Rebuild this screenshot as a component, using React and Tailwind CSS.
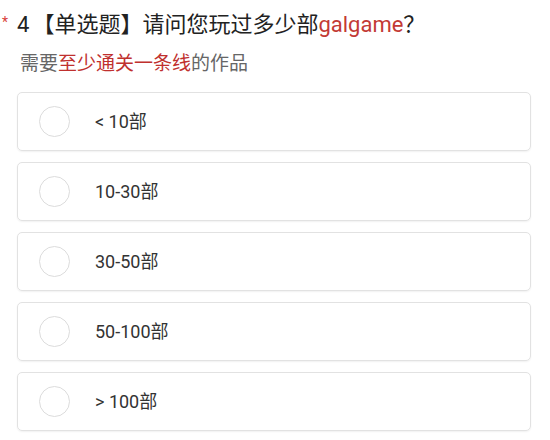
import React from "react";

const options = ["< 10部", "10-30部", "30-50部", "50-100部", "> 100部"];

export default function App() {
  return (
    <div
      className="w-[550px] h-[440px] bg-white overflow-hidden"
      style={{ fontFamily: 'Roboto, "Noto Sans CJK SC", sans-serif' }}
    >
      {/* 题目 */}
      <div className="flex items-center pt-[8px] pl-[2px] h-[42px]">
        <span className="text-[#d9403a] text-[14px] self-start mt-[4px] w-[15px]">*</span>
        <span className="text-[22px] text-[#222] leading-none">4</span>
        <span className="text-[22px] text-[#222] leading-none ml-[3px]">
          【单选题】请问您玩过多少部<span className="text-[#c33a35]">galgame</span>？
        </span>
      </div>
      <div className="pl-[20px] mt-[9px] text-[19px] leading-[26px] text-[#666]">
        需要<span className="text-[#c0302e]">至少通关一条线</span>的作品
      </div>

      {/* 选项 */}
      <div className="flex flex-col gap-[11px] mt-[15px] ml-[17px] w-[514px]">
        {options.map((o) => (
          <div
            key={o}
            className="h-[59px] flex items-center border border-[#e2e2e2] rounded-[5px] shadow-[0_1px_2px_rgba(0,0,0,0.06)]"
          >
            <div className="ml-[21px] w-[31px] h-[31px] rounded-full border-[1.5px] border-[#dcdcdc]" />
            <span className="ml-[25px] text-[18px] text-[#333]">{o}</span>
          </div>
        ))}
      </div>
    </div>
  );
}
